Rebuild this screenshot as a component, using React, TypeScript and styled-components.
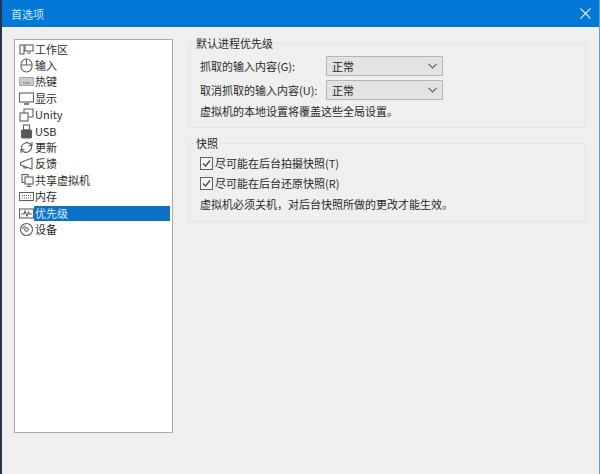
import styled, { createGlobalStyle } from "styled-components";
import type { ReactNode } from "react";

const Global = createGlobalStyle`
  html, body { margin: 0; padding: 0; }
  body {
    width: 600px;
    height: 474px;
    overflow: hidden;
    background: #efefef;
    font-family: "Noto Sans CJK SC", "Liberation Sans", sans-serif;
    font-size: 11px;
    color: #2a2a2a;
  }
`;

const Window = styled.div`
  width: 600px;
  height: 474px;
  box-sizing: border-box;
  display: flex;
  flex-direction: column;
  background: #efefef;
  border-left: 2px solid #22344a;
  border-right: 1px solid #5f9fd4;
`;

const TitleBar = styled.header`
  height: 27px;
  flex: none;
  display: flex;
  align-items: center;
  justify-content: space-between;
  padding: 0 8px 0 9px;
  background: #0078d7;
  color: #cfe6f7;
  font-size: 11px;
`;

const CloseButton = styled.span`
  display: flex;
  color: #dcecf8;
`;

const Body = styled.main`
  flex: 1;
  display: flex;
  align-items: flex-start;
  padding: 12px 12px 0 12px;
  gap: 15px;
`;

const NavList = styled.nav`
  width: 159px;
  height: 394px;
  flex: none;
  box-sizing: border-box;
  padding: 1px 2px;
  background: #fff;
  border: 1px solid #a9abb0;
`;

const NavRow = styled.div`
  height: 16.4px;
  display: flex;
  align-items: center;
  padding-left: 2px;
  white-space: nowrap;
`;

const NavIcon = styled.svg`
  width: 15px;
  height: 15px;
  flex: none;
  fill: none;
  stroke: #5c5f63;
  stroke-width: 1.1;
`;

const NavLabel = styled.span<{ $active?: boolean }>`
  flex: ${(p) => (p.$active ? 1 : "none")};
  height: 15px;
  line-height: 15px;
  padding-left: 1px;
  background: ${(p) => (p.$active ? "#0b72c8" : "transparent")};
  color: ${(p) => (p.$active ? "#d8ecfa" : "#2a2a2a")};
`;

const Content = styled.section`
  width: 398px;
  margin-top: -3px;
  display: flex;
  flex-direction: column;
  gap: 8px;
`;

const Group = styled.fieldset<{ $height: number }>`
  margin: 0;
  height: ${(p) => p.$height}px;
  box-sizing: border-box;
  padding: 3px 11px 0;
  border: 1px solid #e2e2e2;
  border-radius: 2px;
  display: flex;
  flex-direction: column;
`;

const Legend = styled.legend`
  margin-left: -6px;
  padding: 0 2px;
  line-height: 14px;
`;

const FieldList = styled.div`
  padding-top: 1px;
  margin-bottom: -1px;
`;

const FieldRow = styled.div`
  display: grid;
  grid-template-columns: 126px 117px;
  align-items: center;
  height: 24px;
`;

const Select = styled.div`
  height: 20px;
  box-sizing: border-box;
  display: flex;
  align-items: center;
  justify-content: space-between;
  padding: 0 5px;
  background: #e3e3e3;
  border: 1px solid #b5b5b5;
  color: #222;
`;

const Chevron = styled.svg`
  width: 9px;
  height: 6px;
  fill: none;
  stroke: #666;
  stroke-width: 1.2;
`;

const Note = styled.p`
  margin: 0;
  height: 20px;
  line-height: 20px;
`;

const CheckList = styled.div`
  margin-bottom: 1px;
`;

const CheckRow = styled.label`
  display: flex;
  align-items: center;
  gap: 2px;
  height: 20px;
`;

const CheckBox = styled.span`
  width: 11px;
  height: 11px;
  display: flex;
  background: #f6f6f6;
  border: 1px solid #5f5f5f;
`;

const icons: Record<string, ReactNode> = {
  workspace: (
    <>
      <rect x="1" y="3" width="4" height="9" />
      <rect x="6" y="3" width="8" height="6" />
      <path d="M8 11h4" />
    </>
  ),
  input: (
    <>
      <rect x="2" y="1" width="11" height="13" rx="5.5" />
      <path d="M2 7h11M7.500 1v6" />
    </>
  ),
  hotkey: (
    <>
      <rect x="0.500" y="3.500" width="14" height="8" rx="1" fill="#c9cbce" stroke="#a5a7aa" />
      <path d="M4 9h7" stroke="#888" />
    </>
  ),
  display: (
    <>
      <rect x="0.500" y="2" width="14" height="9" />
      <path d="M5 13h5" strokeWidth="1.6" />
    </>
  ),
  unity: (
    <>
      <rect x="1" y="6" width="8" height="8" />
      <path d="M5 6V2h9v8h-5" />
    </>
  ),
  usb: (
    <>
      <rect x="4.500" y="1" width="6" height="5" />
      <rect x="2.500" y="6" width="10" height="8" rx="1" fill="#55585c" />
    </>
  ),
  update: (
    <>
      <path d="M2.500 9a5.500 5.500 0 0 1 9-5l1.500 1.500" />
      <path d="M12.500 6a5.500 5.500 0 0 1-9 5L2 9.500" />
      <path d="M13 2v3.500H9.500M2 13V9.500h3.500" />
    </>
  ),
  feedback: <path d="M1.500 6.500 13 2v11L1.500 9zM4.500 9.500l.5 2.500h2l-.5-1.500" />,
  shared: (
    <>
      <rect x="3" y="1.500" width="6" height="8" />
      <rect x="6" y="4" width="8" height="7" fill="#fff" />
      <path d="M7.500 13.500h5M10 11v2.500" />
    </>
  ),
  memory: (
    <>
      <rect x="0.500" y="3.500" width="14" height="8" />
      <path d="M3 6.500h9M3 9h9" strokeDasharray="1 1" />
    </>
  ),
  priority: (
    <>
      <rect x="0.500" y="3" width="14" height="9" />
      <path d="M2 8h3l1-3 2 5 1.500-4 1 2h2.500" />
    </>
  ),
  device: (
    <>
      <circle cx="7.500" cy="7.500" r="6" />
      <circle cx="7.500" cy="7.500" r="1.800" />
      <path d="M3.500 7a4 4 0 0 1 3-3" />
    </>
  ),
};

const navItems = [
  { id: "workspace", label: "工作区" },
  { id: "input", label: "输入" },
  { id: "hotkey", label: "热键" },
  { id: "display", label: "显示" },
  { id: "unity", label: "Unity" },
  { id: "usb", label: "USB" },
  { id: "update", label: "更新" },
  { id: "feedback", label: "反馈" },
  { id: "shared", label: "共享虚拟机" },
  { id: "memory", label: "内存" },
  { id: "priority", label: "优先级", active: true },
  { id: "device", label: "设备" },
];

function Dropdown() {
  return (
    <Select>
      <span>正常</span>
      <Chevron viewBox="0 0 9 6">
        <path d="M.5 1l4 4 4-4" />
      </Chevron>
    </Select>
  );
}

function Check({ label }: { label: string }) {
  return (
    <CheckRow>
      <CheckBox>
        <svg viewBox="0 0 11 11" width="11" height="11" fill="none" stroke="#444" strokeWidth="1.2">
          <path d="M2 5.500l2.500 2.500L9 2.500" />
        </svg>
      </CheckBox>
      {label}
    </CheckRow>
  );
}

export default function App() {
  return (
    <Window>
      <Global />
      <TitleBar>
        <span>首选项</span>
        <CloseButton>
          <svg viewBox="0 0 11 11" width="11" height="11" fill="none" stroke="currentColor" strokeWidth="1.1">
            <path d="M.5.5l10 10M10.500.5l-10 10" />
          </svg>
        </CloseButton>
      </TitleBar>
      <Body>
        <NavList>
          {navItems.map((item) => (
            <NavRow key={item.id}>
              <NavIcon viewBox="0 0 15 15">{icons[item.id]}</NavIcon>
              <NavLabel $active={item.active}>{item.label}</NavLabel>
            </NavRow>
          ))}
        </NavList>
        <Content>
          <Group $height={92}>
            <Legend>默认进程优先级</Legend>
            <FieldList>
              <FieldRow>
                <span>抓取的输入内容(G):</span>
                <Dropdown />
              </FieldRow>
              <FieldRow>
                <span>取消抓取的输入内容(U):</span>
                <Dropdown />
              </FieldRow>
            </FieldList>
            <Note>虚拟机的本地设置将覆盖这些全局设置。</Note>
          </Group>
          <Group $height={86}>
            <Legend>快照</Legend>
            <CheckList>
              <Check label="尽可能在后台拍摄快照(T)" />
              <Check label="尽可能在后台还原快照(R)" />
            </CheckList>
            <Note>虚拟机必须关机，对后台快照所做的更改才能生效。</Note>
          </Group>
        </Content>
      </Body>
    </Window>
  );
}
